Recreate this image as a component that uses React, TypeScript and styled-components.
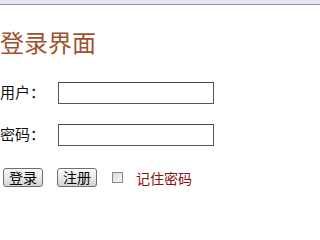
import React from 'react'
import styled, { createGlobalStyle } from 'styled-components'

const GlobalStyle = createGlobalStyle`
  html, body {
    margin: 0;
    padding: 0;
    background: #fff;
  }
  body {
    font-family: "Noto Sans CJK SC", "Liberation Sans", sans-serif;
  }
`

const TopBar = styled.div`
  height: 4px;
  background: #e3e8ee;
  border-bottom: 1px solid #8e949b;
`

const Page = styled.div`
  padding: 25px 0 0 0;
`

const Title = styled.h1`
  margin: 0;
  font-size: 24px;
  line-height: 24px;
  font-weight: normal;
  color: #a0522d;
`

const Form = styled.form`
  display: flex;
  flex-direction: column;
  gap: 20px;
  margin-top: 28px;
`

const Row = styled.div`
  display: flex;
  align-items: center;
  height: 22px;
`

const Label = styled.label`
  width: 58px;
  font-size: 15px;
  line-height: 15px;
  color: #111;
  margin-top: -3px;
`

const TextInput = styled.input`
  box-sizing: border-box;
  width: 156px;
  height: 22px;
  margin: 0;
  padding: 0 3px;
  border: 1px solid #555;
  border-top-color: #444;
  background: #fff;
  outline: none;
`

const Actions = styled.div`
  display: flex;
  align-items: center;
  height: 19px;
  margin-top: 2px;
  padding-left: 3px;
`

const Button = styled.button`
  box-sizing: border-box;
  width: 40px;
  height: 19px;
  margin: 0 14px 0 0;
  padding: 0;
  border: 1px solid #6f6f6f;
  border-radius: 3px;
  background: linear-gradient(#fafafa, #e6e6e6 60%, #d4d4d4);
  font-family: "Noto Sans CJK SC", sans-serif;
  font-size: 14px;
  line-height: 17px;
  color: #000;
`

const Check = styled.input`
  box-sizing: border-box;
  width: 11px;
  height: 11px;
  margin: 0 13px 0 1px;
  appearance: none;
  border: 1px solid #8a8a8a;
  background: linear-gradient(135deg, #dcdcdc, #f4f4f4);
`

const Remember = styled.span`
  font-size: 14px;
  line-height: 14px;
  color: #8b1010;
`

export default function App() {
  return (
    <>
      <GlobalStyle />
      <TopBar />
      <Page>
        <Title>登录界面</Title>
        <Form>
          <Row>
            <Label>用户：</Label>
            <TextInput type="text" />
          </Row>
          <Row>
            <Label>密码：</Label>
            <TextInput type="password" />
          </Row>
          <Actions>
            <Button type="button">登录</Button>
            <Button type="button">注册</Button>
            <Check type="checkbox" />
            <Remember>记住密码</Remember>
          </Actions>
        </Form>
      </Page>
    </>
  )
}
